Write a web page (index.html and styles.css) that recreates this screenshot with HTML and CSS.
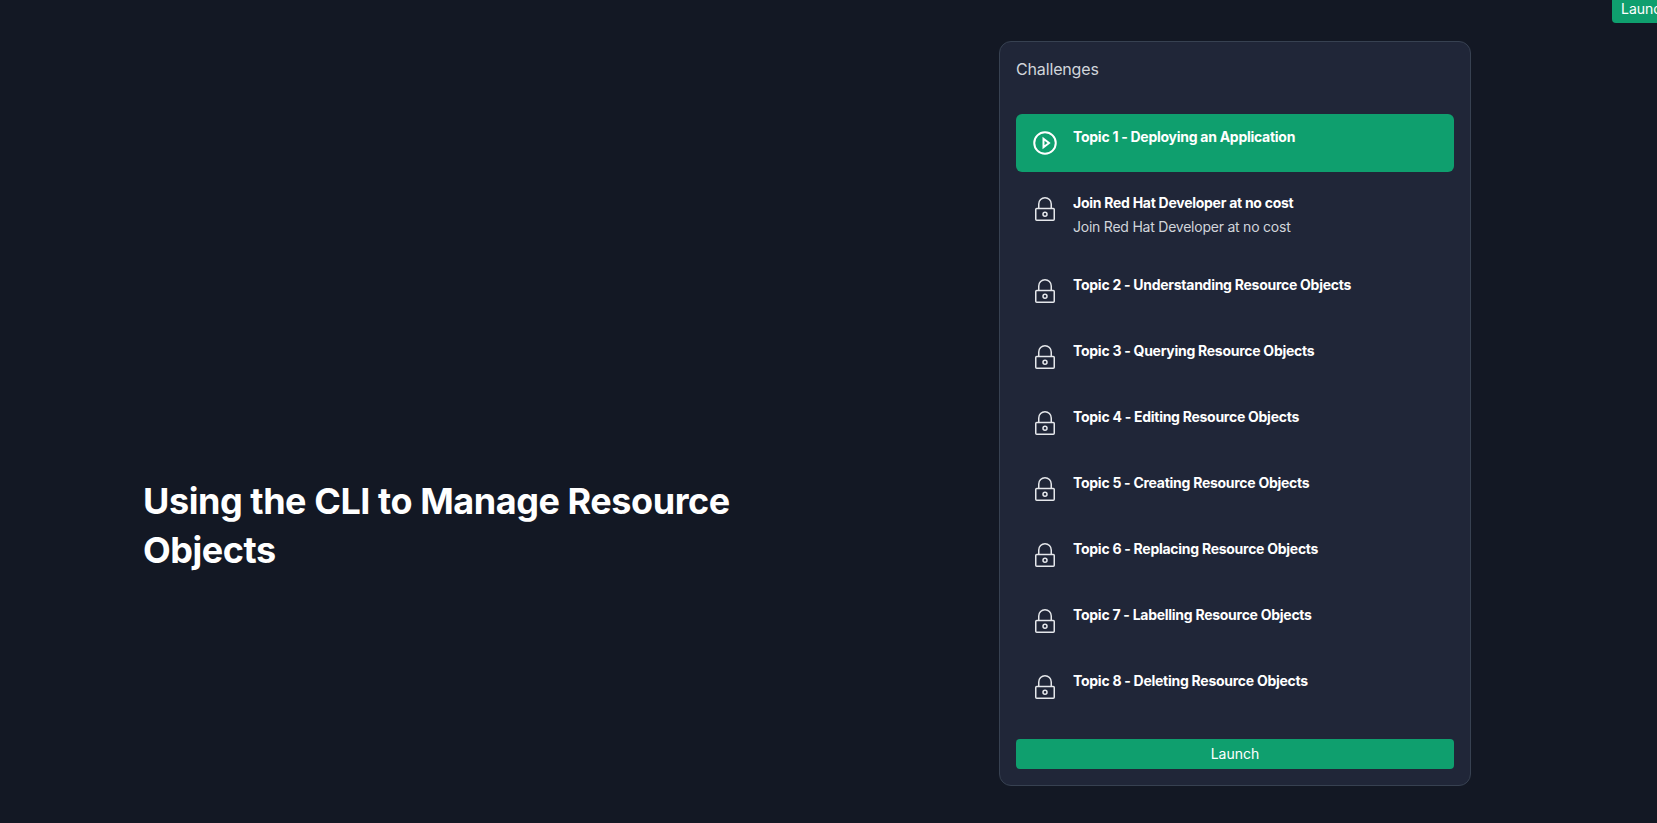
FILE: index.html
```html
<!DOCTYPE html>
<html lang="en">
<head>
  <meta charset="UTF-8">
  <title>Using the CLI to Manage Resource Objects</title>
  <link rel="stylesheet" href="styles.css">
</head>
<body>

  <button class="launch launch-corner">Launch</button>

  <main class="page">
    <section class="intro">
      <h1>Using the CLI to Manage Resource Objects</h1>
    </section>

    <aside class="panel">
      <h2>Challenges</h2>

      <ul class="topics">
        <li class="topic active">
          <svg class="icon icon-play" viewBox="0 0 24 24"><circle cx="12" cy="12" r="10.75"/><path d="M10.5 7.75 16 12 10.5 16.25Z"/></svg>
          <div><h3>Topic 1 - Deploying an Application</h3></div>
        </li>
        <li class="topic">
          <svg class="icon" viewBox="0 0 24 24"><rect x="2.75" y="11.5" width="18.5" height="11.75" rx="1"/><path d="M5.75 11.5V7a6.25 6.25 0 0 1 12.5 0v4.5"/><circle cx="12" cy="17.25" r="2"/></svg>
          <div>
            <h3>Join Red Hat Developer at no cost</h3>
            <p>Join Red Hat Developer at no cost</p>
          </div>
        </li>
        <li class="topic">
          <svg class="icon" viewBox="0 0 24 24"><rect x="2.75" y="11.5" width="18.5" height="11.75" rx="1"/><path d="M5.75 11.5V7a6.25 6.25 0 0 1 12.5 0v4.5"/><circle cx="12" cy="17.25" r="2"/></svg>
          <div><h3>Topic 2 - Understanding Resource Objects</h3></div>
        </li>
        <li class="topic">
          <svg class="icon" viewBox="0 0 24 24"><rect x="2.75" y="11.5" width="18.5" height="11.75" rx="1"/><path d="M5.75 11.5V7a6.25 6.25 0 0 1 12.5 0v4.5"/><circle cx="12" cy="17.25" r="2"/></svg>
          <div><h3>Topic 3 - Querying Resource Objects</h3></div>
        </li>
        <li class="topic">
          <svg class="icon" viewBox="0 0 24 24"><rect x="2.75" y="11.5" width="18.5" height="11.75" rx="1"/><path d="M5.75 11.5V7a6.25 6.25 0 0 1 12.5 0v4.5"/><circle cx="12" cy="17.25" r="2"/></svg>
          <div><h3>Topic 4 - Editing Resource Objects</h3></div>
        </li>
        <li class="topic">
          <svg class="icon" viewBox="0 0 24 24"><rect x="2.75" y="11.5" width="18.5" height="11.75" rx="1"/><path d="M5.75 11.5V7a6.25 6.25 0 0 1 12.5 0v4.5"/><circle cx="12" cy="17.25" r="2"/></svg>
          <div><h3>Topic 5 - Creating Resource Objects</h3></div>
        </li>
        <li class="topic">
          <svg class="icon" viewBox="0 0 24 24"><rect x="2.75" y="11.5" width="18.5" height="11.75" rx="1"/><path d="M5.75 11.5V7a6.25 6.25 0 0 1 12.5 0v4.5"/><circle cx="12" cy="17.25" r="2"/></svg>
          <div><h3>Topic 6 - Replacing Resource Objects</h3></div>
        </li>
        <li class="topic">
          <svg class="icon" viewBox="0 0 24 24"><rect x="2.75" y="11.5" width="18.5" height="11.75" rx="1"/><path d="M5.75 11.5V7a6.25 6.25 0 0 1 12.5 0v4.5"/><circle cx="12" cy="17.25" r="2"/></svg>
          <div><h3>Topic 7 - Labelling Resource Objects</h3></div>
        </li>
        <li class="topic">
          <svg class="icon" viewBox="0 0 24 24"><rect x="2.75" y="11.5" width="18.5" height="11.75" rx="1"/><path d="M5.75 11.5V7a6.25 6.25 0 0 1 12.5 0v4.5"/><circle cx="12" cy="17.25" r="2"/></svg>
          <div><h3>Topic 8 - Deleting Resource Objects</h3></div>
        </li>
      </ul>

      <button class="launch launch-wide">Launch</button>
    </aside>
  </main>

</body>
</html>
```

FILE: styles.css
```css
* {
  box-sizing: border-box;
}
html, body {
  height: 100%;
}
body {
  margin: 0;
  overflow: hidden;
  position: relative;
  background: #131824;
  color: #fff;
  font-family: Inter, "Liberation Sans", sans-serif;
}
.page {
  display: flex;
  justify-content: space-between;
  padding: 41px 186px 0 143px;
}
.intro {
  width: 600px;
  padding-top: 436px;
}
h1 {
  margin: 0;
  font-size: 36px;
  line-height: 49px;
  font-weight: 700;
  letter-spacing: -0.44px;
}
.panel {
  width: 472px;
  height: 745px;
  padding: 16px;
  background: #202638;
  border: 1px solid #374151;
  border-radius: 12px;
}
h2 {
  margin: -1px 0 33px;
  font-size: 16px;
  line-height: 24px;
  font-weight: 400;
  color: #d1d5db;
  letter-spacing: -0.15px;
}
.topics {
  list-style: none;
  margin: 0 0 23px;
  padding: 0;
  display: flex;
  flex-direction: column;
  gap: 8px;
}
.topic {
  display: flex;
  gap: 16px;
  min-height: 58px;
  padding: 13px 17px;
  border-radius: 6px;
}
.topic.active {
  background: #0f9f6e;
}
.topic h3 {
  margin: 0;
  font-size: 14px;
  line-height: 20px;
  font-weight: 700;
  letter-spacing: -0.27px;
}
.topic p {
  margin: 4px 0;
  font-size: 14px;
  line-height: 20px;
  color: #d1d5db;
  letter-spacing: -0.23px;
}
.icon {
  width: 24px;
  height: 24px;
  margin-top: 4px;
  flex-shrink: 0;
  fill: none;
  stroke: #e5e7eb;
  stroke-width: 1.5;
}
.icon-play {
  stroke: #fff;
  stroke-width: 2;
}
.launch {
  height: 30px;
  padding: 0 9px 1px;
  border: 0;
  border-radius: 4px;
  background: #0f9f6e;
  color: #fff;
  font-family: inherit;
  font-size: 14px;
}
.launch-wide {
  display: block;
  width: 100%;
}
.launch-corner {
  position: absolute;
  top: -7px;
  left: 1612px;
  width: 66px;
  padding-bottom: 0;
  text-align: left;
}
```
